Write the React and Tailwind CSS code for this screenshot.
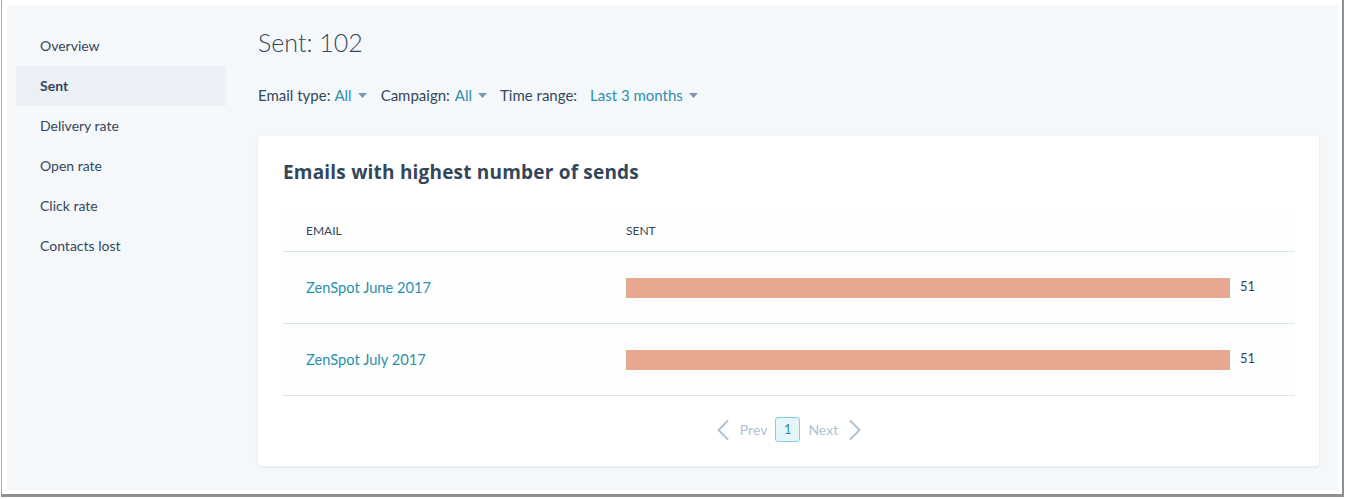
import React from "react";

const navItems = ["Overview", "Sent", "Delivery rate", "Open rate", "Click rate", "Contacts lost"];

function Caret() {
  return (
    <svg width="9" height="5" viewBox="0 0 9 5" className="ml-[6px] mt-[1px]">
      <path d="M0 0 L9 0 L4.5 5 Z" fill="#7c98b6" />
    </svg>
  );
}

function Filter({ label, value, gap }) {
  return (
    <div className="flex items-center">
      <span className="text-[#33475b]">{label}</span>
      <span className={`text-[#2d8fad] ${gap}`}>{value}</span>
      <Caret />
    </div>
  );
}

const rows = [
  { name: "ZenSpot June 2017", value: 51 },
  { name: "ZenSpot July 2017", value: 51 },
];

export default function App() {
  return (
    <div
      className="w-[1345px] h-[499px] bg-white overflow-hidden"
      style={{ fontFamily: "Lato, 'Open Sans', sans-serif" }}
    >
      <div className="ml-px w-[1343px] h-[497px] border-l border-[#a8a8a8] border-r-2 border-b-[3px] border-r-[#8f8f8f] border-b-[#8f8f8f] bg-white pl-[5px] pt-[5px] pr-[4px] pb-[3px]">
        <div className="w-full h-full bg-[#f5f8fa] flex pl-[9px] pr-[19px]">
          {/* Sidebar */}
          <nav className="w-[210px] pt-[21px] flex flex-col">
            {navItems.map((item) => (
              <div
                key={item}
                className={`h-[40px] flex items-center pl-[24px] pb-[2px] text-[14px] text-[#33475b] ${
                  item === "Sent" ? "bg-[#eaf0f6] font-bold" : ""
                }`}
              >
                {item}
              </div>
            ))}
          </nav>

          {/* Main */}
          <main className="flex-1 ml-[32px] pt-[22px] flex flex-col">
            <h1 className="text-[25px] leading-[30px] font-light text-[#33475b]">Sent: 102</h1>
            <div className="mt-[28px] h-[20px] flex items-center text-[15px]">
              <Filter label="Email type:" value="All" gap="ml-[4px]" />
              <div className="w-[14px]" />
              <Filter label="Campaign:" value="All" gap="ml-[5px]" />
              <div className="w-[13px]" />
              <Filter label="Time range:" value="Last 3 months" gap="ml-[13px]" />
            </div>

            <section className="mt-[31px] h-[330px] bg-white rounded-[3px] shadow-[0_1px_3px_rgba(45,62,80,0.12)] px-[25px] pr-[24px] pt-[24px] flex flex-col">
              <h2
                className="text-[19px] leading-[24px] font-bold text-[#33475b] tracking-[0.2px]"
                style={{ fontFamily: "'Open Sans', Lato, sans-serif" }}
              >
                Emails with highest number of sends
              </h2>
              <div className="mt-[24px] bg-[#fdfefe]">
                <div className="h-[44px] flex items-center pt-[3px] border-b border-[#dfe3eb] text-[12px] text-[#33475b] uppercase">
                  <div className="w-[320px] pl-[23px]">Email</div>
                  <div className="pl-[23px]">Sent</div>
                </div>
                {rows.map((r) => (
                  <div key={r.name} className="h-[72px] flex items-center border-b border-[#dfe3eb]">
                    <div className="w-[320px] pl-[23px] text-[14.7px] text-[#2d8fad]">{r.name}</div>
                    <div className="flex-1 flex items-center pl-[23px] pr-[24px]">
                      <div className="flex-1 h-[20px] bg-[#e8a890]" />
                      <span className="ml-[10px] w-[31px] text-[13px] text-[#33475b] -mt-[2px]">{r.value}</span>
                    </div>
                  </div>
                ))}
              </div>

              <div className="mt-[21px] flex items-center justify-center text-[14px] text-[#b0c1d4]">
                <svg width="12" height="22" viewBox="0 0 12 22" className="mr-[11px]">
                  <path d="M10.5 2 L1.5 11 L10.5 20" fill="none" stroke="#b0c1d4" strokeWidth="2" strokeLinecap="round" strokeLinejoin="round" />
                </svg>
                <span>Prev</span>
                <span className="mx-[8px] w-[25px] h-[25px] flex items-center justify-center rounded-[3px] border border-[#7fd1de] bg-[#e5f5f8] text-[#2d8fad] text-[13px]">
                  1
                </span>
                <span>Next</span>
                <svg width="12" height="22" viewBox="0 0 12 22" className="ml-[11px]">
                  <path d="M1.5 2 L10.5 11 L1.5 20" fill="none" stroke="#b0c1d4" strokeWidth="2" strokeLinecap="round" strokeLinejoin="round" />
                </svg>
              </div>
            </section>
          </main>
        </div>
      </div>
    </div>
  );
}
